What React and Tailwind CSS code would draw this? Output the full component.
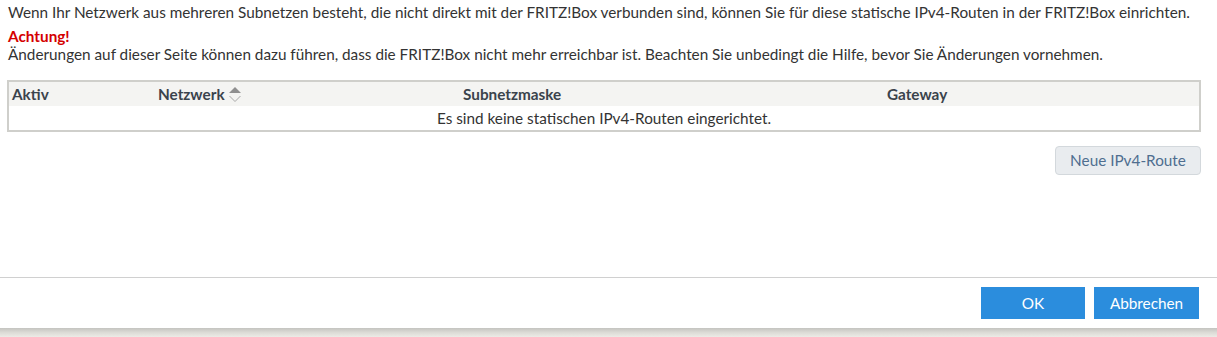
export default function App() {
  return (
    <div className="w-[1217px] h-[337px] flex flex-col text-[#333] font-['Lato',sans-serif] text-[15.3px] leading-[19px]">
      <div className="bg-white h-[328px] flex flex-col">
        <div className="px-[8px] pt-[3px] flex-1">
          <p className="h-[24px]">
            Wenn Ihr Netzwerk aus mehreren Subnetzen besteht, die nicht direkt mit der FRITZ!Box verbunden sind, können Sie für diese statische IPv4-Routen in der FRITZ!Box einrichten.
          </p>
          <p className="font-bold text-[#d40000] h-[18px]">Achtung!</p>
          <p>Änderungen auf dieser Seite können dazu führen, dass die FRITZ!Box nicht mehr erreichbar ist. Beachten Sie unbedingt die Hilfe, bevor Sie Änderungen vornehmen.</p>
          <div className="mt-[16px] mr-[8px] -ml-[1px] border-2 border-[#cfcfcb]">
            <div className="grid grid-cols-[149px_302px_427px_1fr] h-[24px] items-center bg-[#f4f4f2] font-bold text-[#3a434c]">
              <div className="pl-[3px]">Aktiv</div>
              <div className="flex items-center gap-[2px]">
                Netzwerk
                <svg width="14" height="18" viewBox="0 0 14 18" className="ml-[1px]">
                  <path d="M1 8 L7 2 L13 8 Z" fill="#8f8f8f" />
                  <path d="M1.5 11 L7 16.5 L12.5 11" fill="none" stroke="#a8a8a8" strokeWidth="1" />
                </svg>
              </div>
              <div className="pl-[3px]">Subnetzmaske</div>
              <div>Gateway</div>
            </div>
            <div className="h-[24px] flex items-center justify-center">
              Es sind keine statischen IPv4-Routen eingerichtet.
            </div>
          </div>
          <div className="flex justify-end mt-[14px] mr-[8px]">
            <button className="w-[146px] h-[29px] rounded-[4px] border border-[#d3d8dc] bg-[#e9ecef] text-[#4f6e8f]">
              Neue IPv4-Route
            </button>
          </div>
        </div>
        <div className="border-t border-[#d0d0d0] h-[51px] flex items-start justify-end gap-[9px] pt-[9px] pr-[18px]">
          <button className="w-[104px] h-[32px] bg-[#2b8ddd] text-white">OK</button>
          <button className="w-[105px] h-[32px] bg-[#2b8ddd] text-white">Abbrechen</button>
        </div>
      </div>
      <div className="flex-1 bg-gradient-to-b from-[#c4c4c0] via-[#dcdbd6] to-[#ecebe6]" />
    </div>
  )
}
